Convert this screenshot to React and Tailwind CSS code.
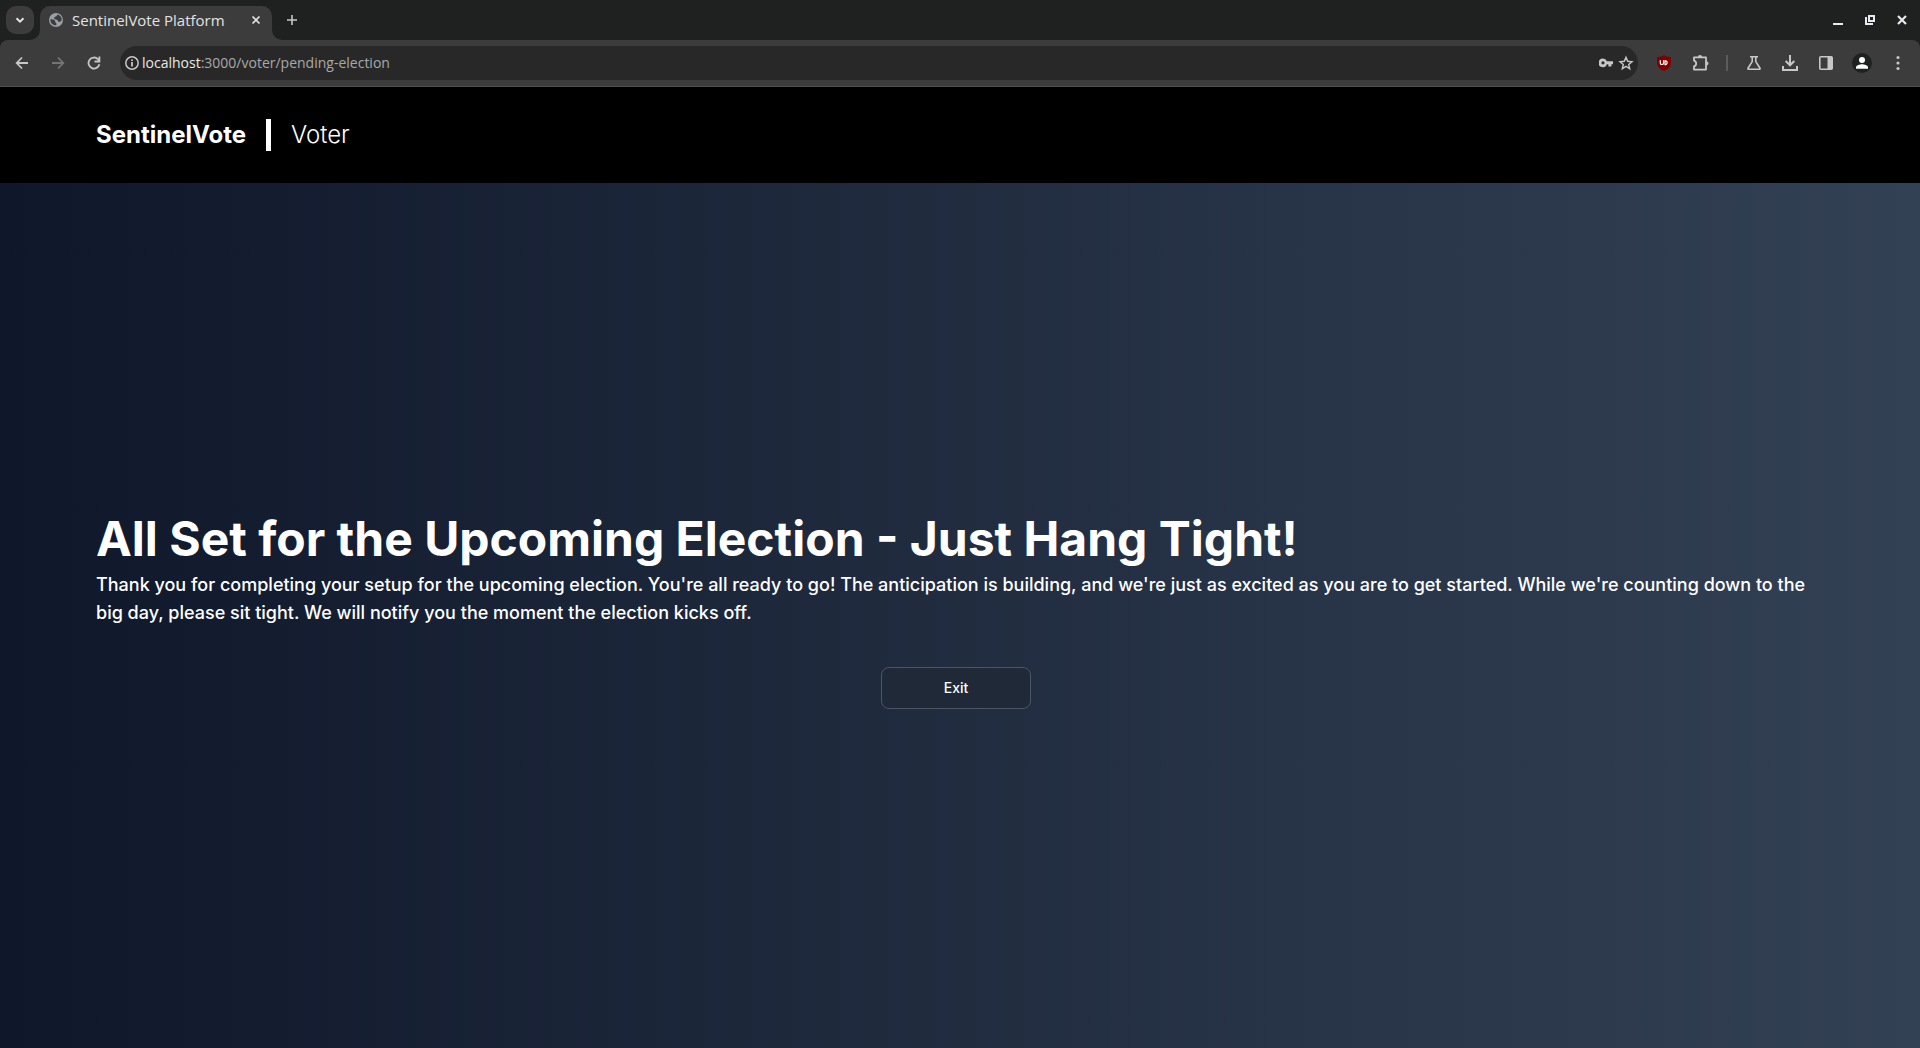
const stroke = { fill: "none", stroke: "currentColor", strokeWidth: 2 };

function Icon({ size = 20, className = "", children }) {
  return (
    <svg width={size} height={size} viewBox={`0 0 ${size} ${size}`} className={className} aria-hidden="true">
      {children}
    </svg>
  );
}

function ToolButton({ label, children, dim = false }) {
  return (
    <button
      type="button"
      aria-label={label}
      className={`flex h-9 w-9 items-center justify-center ${dim ? "text-[#757575]" : "text-[#c7c7c7]"}`}
    >
      {children}
    </button>
  );
}

function WindowButton({ label, children }) {
  return (
    <button type="button" aria-label={label} className="flex h-8 w-8 items-center justify-center text-[#e8eaed]">
      {children}
    </button>
  );
}

function TabStrip() {
  return (
    <div className="flex h-10 items-start justify-between bg-[#1f2120]">
      <div className="flex items-start">
        <button
          type="button"
          aria-label="Search tabs"
          className="mt-1.5 ml-1.5 flex h-7 w-7 items-center justify-center rounded-[10px] bg-[#3c3c3c] text-[#e3e3e3]"
        >
          <Icon size={10}>
            <path d="M1.5 3.2 5 6.7l3.500-3.500" {...stroke} />
          </Icon>
        </button>
        <div className="relative mt-1.5 ml-1.5 flex h-[34px] w-[232px] items-center rounded-t-[10px] bg-[#3c3c3c] pb-1.5 pl-2 text-[#e3e3e3]">
          <svg width="10" height="10" viewBox="0 0 10 10" className="absolute bottom-0 -left-2.5 text-[#3c3c3c]" aria-hidden="true">
            <path d="M10 0v10H0A10 10 0 0 0 10 0z" fill="currentColor" />
          </svg>
          <svg width="10" height="10" viewBox="0 0 10 10" className="absolute -right-2.5 bottom-0 text-[#3c3c3c]" aria-hidden="true">
            <path d="M0 0v10h10A10 10 0 0 1 0 0z" fill="currentColor" />
          </svg>
          <Icon size={16} className="shrink-0">
            <circle cx="8" cy="8" r="7" fill="#9aa0a6" />
            <path
              d="M9.500 2.400C8.700 3.600 8.900 4 7.800 4.400 6.600 4.800 6 5.300 6.300 6.400c.5 1.300 2.300.8 3.200 1.600.9.900.3 1.900 1.400 1.900 1.200 0 1.700-.9 2.700-1.200A5.700 5.700 0 0 0 9.500 2.400zM2.400 7.300c1.600.2 3.400.1 4.300 1 .7.8.1 1.700.9 2.300.8.500 1 1 .7 3A5.700 5.700 0 0 1 2.400 7.300z"
              fill="#3c3c3c"
            />
          </Icon>
          <span className="ml-2 flex-1 font-['Open_Sans',sans-serif] text-[15px] leading-5 whitespace-nowrap">
            SentinelVote Platform
          </span>
          <button type="button" aria-label="Close tab" className="mr-1.5 flex h-5 w-5 items-center justify-center">
            <Icon size={10}>
              <path d="M1.500 1.500l7 7M8.500 1.500l-7 7" {...stroke} strokeWidth={1.7} />
            </Icon>
          </button>
        </div>
        <button
          type="button"
          aria-label="New tab"
          className="mt-1.5 ml-1.5 flex h-7 w-7 items-center justify-center text-[#c7c7c7]"
        >
          <Icon size={10}>
            <path d="M5 0v10M0 5h10" {...stroke} strokeWidth={1.6} />
          </Icon>
        </button>
      </div>
      <div className="mt-1 mr-0.5 flex">
        <WindowButton label="Minimize">
          <Icon size={10}>
            <path d="M0 9h10" {...stroke} />
          </Icon>
        </WindowButton>
        <WindowButton label="Restore">
          <Icon size={10}>
            <path d="M4 1h5v5H4z" {...stroke} />
            <path d="M1 2v7h7" {...stroke} />
          </Icon>
        </WindowButton>
        <WindowButton label="Close">
          <Icon size={10}>
            <path d="M1 1l8 8M9 1L1 9" {...stroke} strokeWidth={2.2} />
          </Icon>
        </WindowButton>
      </div>
    </div>
  );
}

function AddressBar() {
  return (
    <div className="mx-2 flex h-[34px] flex-1 items-center rounded-full bg-[#282828] pr-0.5 pl-1 text-[#c7c7c7]">
      <button type="button" aria-label="View site information" className="flex shrink-0 items-center">
        <Icon size={16}>
          <circle cx="8" cy="8" r="6.200" {...stroke} strokeWidth={1.5} />
          <path d="M7.100 7h1.800v4.400H7.100zM7.100 4.400h1.800v1.700H7.100z" fill="currentColor" />
        </Icon>
      </button>
      <div className="relative ml-0.5 flex-1 font-['Open_Sans',sans-serif] text-sm leading-5">
        <input
          aria-label="Address"
          defaultValue="localhost:3000/voter/pending-election"
          className="block w-full bg-transparent text-transparent outline-none"
        />
        <span className="pointer-events-none absolute inset-0 text-[#a8a8a8]" aria-hidden="true">
          <span className="text-[#e8e8e8]">localhost</span>:3000/voter/pending-election
        </span>
      </div>
      <button type="button" aria-label="Manage passwords" className="flex h-5 w-5 items-center justify-center">
        <Icon size={14}>
          <path
            d="M4 2.500a4.300 4.300 0 1 0 3.900 5.700h1.500v2.400h3V8.200H14V5.200H7.900A4.300 4.300 0 0 0 4 2.500zm0 2.700a1.600 1.600 0 1 1 0 3.200 1.600 1.600 0 0 1 0-3.200z"
            fill="currentColor"
            fillRule="evenodd"
          />
        </Icon>
      </button>
      <button type="button" aria-label="Bookmark this tab" className="flex h-5 w-5 items-center justify-center">
        <Icon size={16}>
          <path
            d="M8 2.300l1.700 4 4.300.4-3.300 2.800 1 4.200L8 11.400l-3.700 2.300 1-4.200L2 6.700l4.300-.4z"
            {...stroke}
            strokeWidth={1.4}
          />
        </Icon>
      </button>
    </div>
  );
}

function Toolbar() {
  return (
    <div className="bg-[#1f2120]">
      <div className="flex h-[47px] items-center rounded-t-[8px] border-b border-[#505050] bg-[#3c3c3c] px-1">
        <ToolButton label="Back">
          <Icon size={14}>
            <path d="M13 7H2M7 1.500L1.700 7 7 12.500" {...stroke} strokeWidth={1.800} />
          </Icon>
        </ToolButton>
        <ToolButton label="Forward" dim>
          <Icon size={14}>
            <path d="M1 7h11M7 1.500L12.300 7 7 12.500" {...stroke} strokeWidth={1.800} />
          </Icon>
        </ToolButton>
        <ToolButton label="Reload">
          <Icon size={14}>
            <path d="M12.400 8.200A5.500 5.500 0 1 1 10.900 3.100L12.300 4.800" {...stroke} strokeWidth={1.800} />
            <path d="M12.400 .5V5.500H7.500" {...stroke} strokeWidth={1.800} />
          </Icon>
        </ToolButton>
        <AddressBar />
        <ToolButton label="uBlock Origin">
          <Icon size={16}>
            <path d="M8 0c2 1.400 4.200 2 7 2v5.500c0 4-2.700 6.700-7 8.500-4.300-1.800-7-4.500-7-8.500V2C3.800 2 6 1.400 8 0z" fill="#800000" />
            <path d="M4.300 5.300v2.600a1.600 1.600 0 0 0 3.200 0V5.300M9 5.900h.7a1.900 1.900 0 0 1 0 3.700H9z" fill="none" stroke="#fff" strokeWidth="1.200" />
          </Icon>
        </ToolButton>
        <ToolButton label="Extensions">
          <Icon size={18}>
            <path
              d="M3 3.400h12v12.200H3v-3.200c2.900-.9 2.900-4.900 0-5.800z"
              {...stroke}
              strokeWidth={1.800}
              strokeLinejoin="round"
            />
            <path d="M6.900 3a2.100 2.100 0 0 1 4.200 0zM15.400 7.300a2.100 2.100 0 0 1 0 4.200z" fill="currentColor" />
          </Icon>
        </ToolButton>
        <span className="mx-2 h-4 w-0.5 bg-[#5c5c5c]" />
        <ToolButton label="Experiments">
          <Icon size={16}>
            <path d="M4 1.800h8M6.200 2v4.600L2 13.200q-.3 1 .7 1h10.600q1 0 .7-1L9.800 6.600V2" {...stroke} strokeWidth={1.600} />
          </Icon>
        </ToolButton>
        <ToolButton label="Downloads">
          <Icon size={16}>
            <path d="M8 0v10M3.700 6L8 10.300 12.300 6M1 11v4h14v-4" {...stroke} />
          </Icon>
        </ToolButton>
        <ToolButton label="Side panel">
          <Icon size={16}>
            <rect x="1.800" y="1.800" width="12.400" height="12.400" rx="1" {...stroke} strokeWidth={1.600} />
            <path d="M9.500 2H14v12H9.500z" fill="currentColor" />
          </Icon>
        </ToolButton>
        <ToolButton label="Profile">
          <Icon size={20}>
            <circle cx="10" cy="10" r="10" fill="#1f2120" />
            <circle cx="10" cy="7" r="3" fill="#fff" />
            <path d="M4 15.800v-1.500C4 12.300 8 11.300 10 11.300s6 1 6 3v1.500z" fill="#fff" />
          </Icon>
        </ToolButton>
        <ToolButton label="Menu">
          <Icon size={16}>
            <circle cx="8" cy="2.500" r="1.600" fill="currentColor" />
            <circle cx="8" cy="8" r="1.600" fill="currentColor" />
            <circle cx="8" cy="13.500" r="1.600" fill="currentColor" />
          </Icon>
        </ToolButton>
      </div>
    </div>
  );
}

export default function App() {
  return (
    <div className="flex min-h-screen flex-col">
      <div>
        <TabStrip />
        <Toolbar />
      </div>
      <div className="flex flex-1 flex-col font-[Inter,sans-serif] text-white">
        <header className="flex items-center gap-5 bg-black px-24 py-8 text-2xl">
          <span className="font-bold">SentinelVote</span>
          <span className="h-8 w-[5px] bg-white" />
          <span className="font-light">Voter</span>
        </header>
        <main className="flex flex-1 flex-col justify-center bg-[linear-gradient(to_right,#0f172a,#334155)] px-24">
          <h1 className="text-5xl font-bold">All Set for the Upcoming Election - Just Hang Tight!</h1>
          <p className="mt-2 text-lg font-medium">
            Thank you for completing your setup for the upcoming election. You're all ready to go! The anticipation is
            building, and we're just as excited as you are to get started. While we're counting down to the big day,
            please sit tight. We will notify you the moment the election kicks off.
          </p>
          <div className="mt-10 flex justify-center">
            <button
              type="button"
              className="me-2 mb-2 w-[150px] rounded-lg border border-gray-600 bg-[#1f2937] px-5 py-2.5 text-sm font-medium"
            >
              Exit
            </button>
          </div>
        </main>
      </div>
    </div>
  );
}
